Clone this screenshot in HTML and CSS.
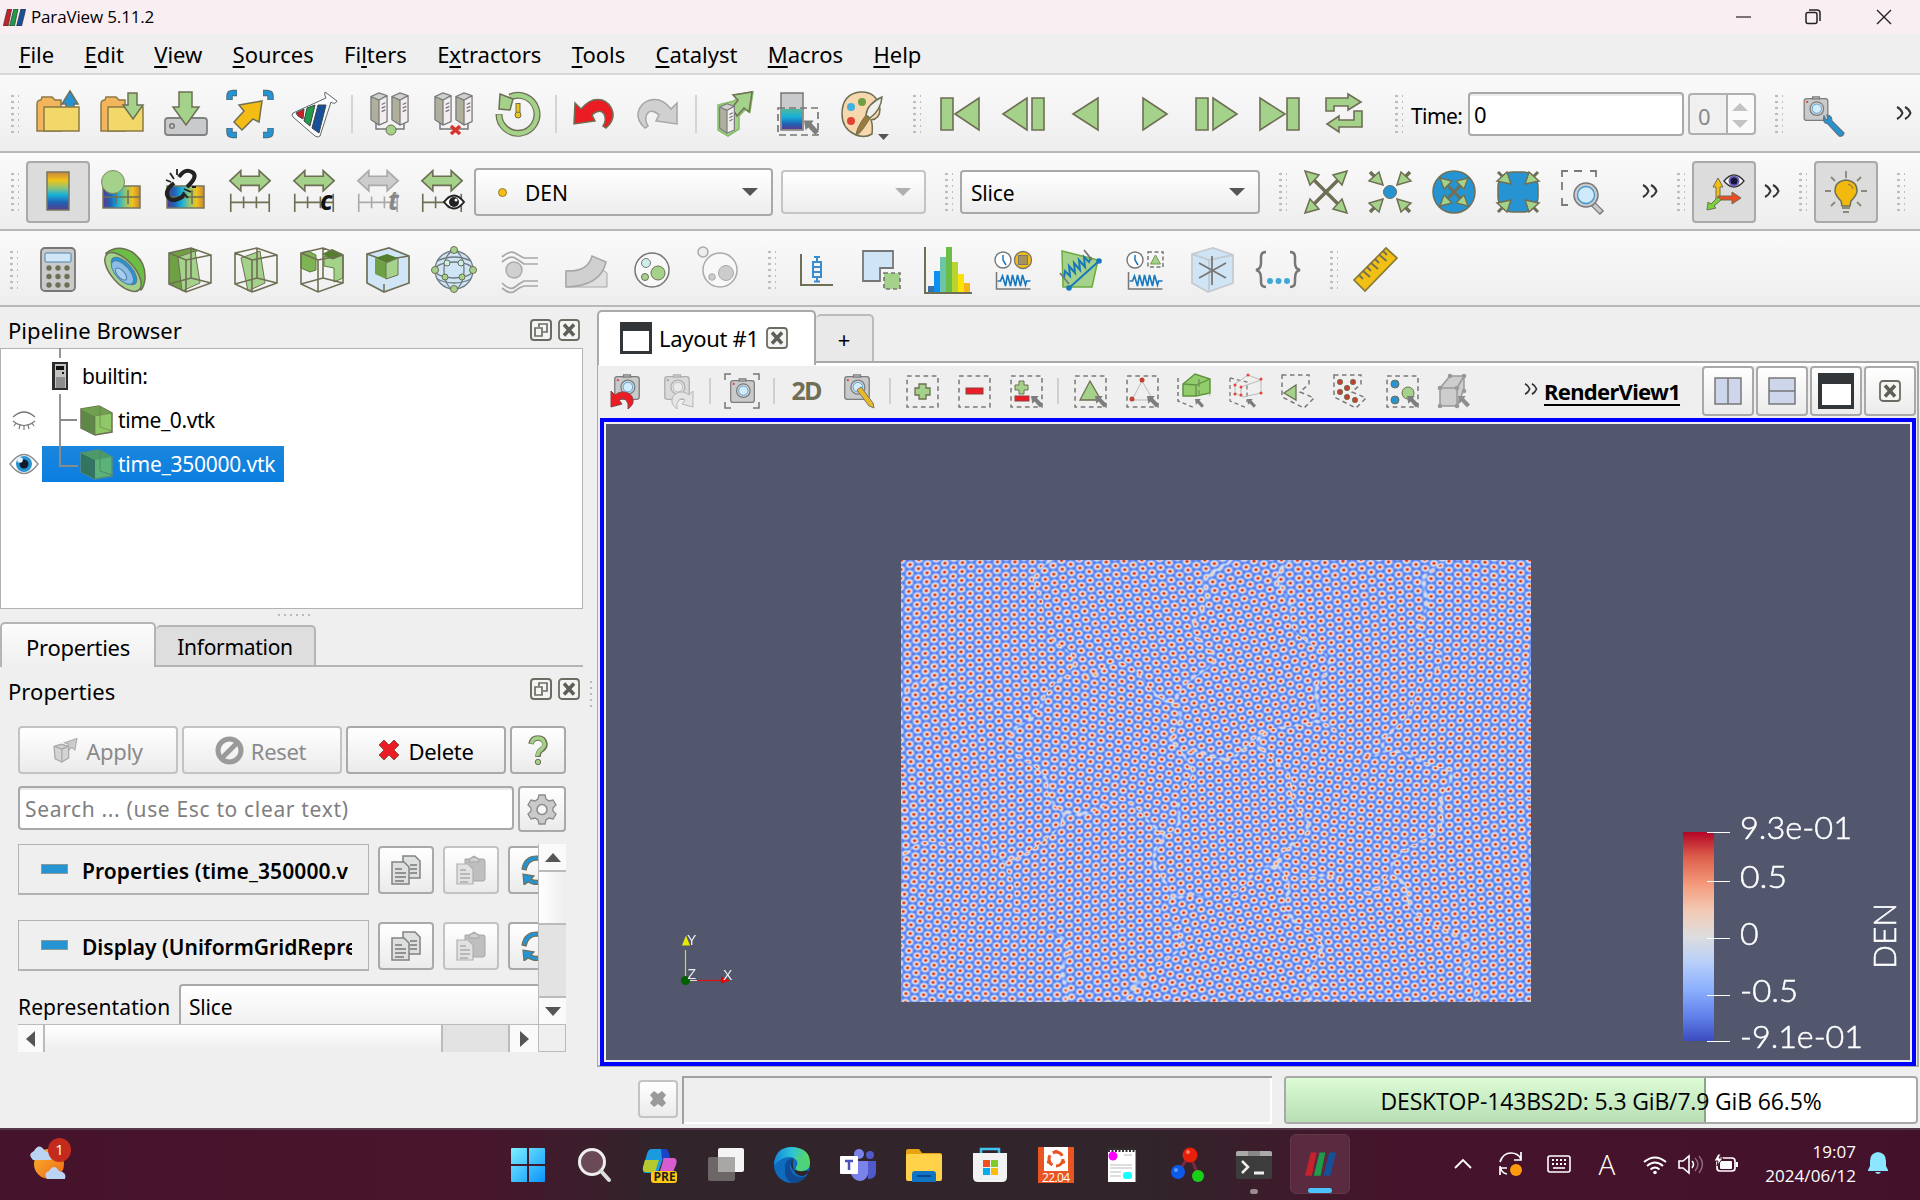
FILE: index.html
```html
<!DOCTYPE html>
<html lang="en">
<head>
<meta charset="utf-8">
<title>ParaView 5.11.2</title>
<link rel="stylesheet" href="styles.css">
</head>
<body>
<svg class="defs" width="0" height="0">
  <defs>
    <linearGradient id="rainbow" x1="0" y1="0" x2="0" y2="1"><stop offset="0" stop-color="#c9843c"/><stop offset=".22" stop-color="#f0c419"/><stop offset=".42" stop-color="#8cc37a"/><stop offset=".6" stop-color="#17b0d8"/><stop offset=".8" stop-color="#1f62b5"/><stop offset="1" stop-color="#5a3b8c"/></linearGradient>
    <linearGradient id="rainbowH" x1="0" y1="0" x2="1" y2="0"><stop offset="0" stop-color="#5a3b8c"/><stop offset=".2" stop-color="#1f62b5"/><stop offset=".4" stop-color="#17b0d8"/><stop offset=".6" stop-color="#8cc37a"/><stop offset=".8" stop-color="#f0c419"/><stop offset="1" stop-color="#c9843c"/></linearGradient>
    <linearGradient id="cool" x1="0" y1="0" x2="0" y2="1"><stop offset="0" stop-color="#4db99b"/><stop offset=".4" stop-color="#17b0d8"/><stop offset=".75" stop-color="#1f62b5"/><stop offset="1" stop-color="#5a3b8c"/></linearGradient>
    <linearGradient id="coolwarm" x1="0" y1="0" x2="0" y2="1"><stop offset="0" stop-color="#b40426"/><stop offset=".12" stop-color="#dd5f4b"/><stop offset=".25" stop-color="#f49a7b"/><stop offset=".38" stop-color="#f2cbb7"/><stop offset=".5" stop-color="#dddddd"/><stop offset=".62" stop-color="#b9d0f9"/><stop offset=".75" stop-color="#8db0fe"/><stop offset=".88" stop-color="#6282ea"/><stop offset="1" stop-color="#3b4cc0"/></linearGradient>
    <symbol id="camera" viewBox="0 0 32 32"><path d="M12 3V1h8v2h7q3 0 3 3v20q0 3-3 3H5q-3 0-3-3V6q0-3 3-3z" fill="#c9cacb" stroke="#7c7c7c" stroke-width="1.5"/><path d="M11 3.5h10" stroke="#7c7c7c" stroke-width="1.5"/><circle cx="17" cy="15" r="8" fill="#dadada" stroke="#7c7c7c" stroke-width="1.5"/><circle cx="17" cy="15" r="5.5" fill="#d3ecfb" stroke="#4595cc"/><circle cx="5.5" cy="7" r="1.3" fill="#e8413a"/></symbol>
    <symbol id="cursor" viewBox="0 0 14 14"><path d="M0 0h9L7 2.5 14 10l-3.500 3.500L4 6.500 1.500 9z" fill="#7d7d7d"/></symbol>
    <symbol id="cursorThin" viewBox="0 0 14 14"><path d="M0 0h9L7 2.500 14 10l-3.500 3.500L4 6.500 1.500 9z" fill="#8e8e8e"/></symbol>
    <symbol id="tower" viewBox="0 0 20 38"><path d="M1 5 10 1l9 3v29l-9 4-9-6z" fill="#aeb09c"/><path d="M10 9 19 4v29l-9 4z" fill="#f4ecee"/><path d="M1 5 10 1l9 3-9 5z" fill="#cfd2cc"/><path d="M1 5 10 1l9 3v29l-9 4-9-6zM1 5l9 4 9-5M10 9v28M13 14l4-2m-4 6 4-2m-4 6 4-2" fill="none" stroke="#77777a" stroke-width="1.400"/></symbol>
    <symbol id="range" viewBox="0 0 48 48"><path d="M2 14 14 3v6h20V3l12 11-12 11v-6H14v6z" stroke-width="1.800"/><path d="M3 28v20M45 28v20M17 31v13M31 31v13M3 37.500h42" fill="none" stroke-width="1.800"/></symbol>
    <symbol id="wire" viewBox="0 0 48 48"><path d="M3 7 25 2l20 7v28L20 46 3 38zM3 7l17 7 25-5M20 14v32M25 2v30M3 38l22-6 20 5" fill="none" stroke="#6f6f55" stroke-width="1.600"/></symbol>
    <symbol id="wave" viewBox="0 0 36 18"><path d="M1 0v17h34" fill="none" stroke="#777" stroke-width="1.500"/><path d="M2 9h3l2-5 3 10 2-11 3 11 2-11 3 11 2-11 3 11 2-11 3 10 1-4h4" fill="none" stroke="#1878be" stroke-width="1.600"/></symbol>
    <symbol id="clock" viewBox="0 0 18 18"><circle cx="9" cy="9" r="8" fill="#fff" stroke="#777" stroke-width="1.400"/><path d="M9 4v5l3 5" fill="none" stroke="#1878be" stroke-width="1.500"/></symbol>
    <symbol id="floatwin" viewBox="0 0 22 22"><rect x="1" y="1" width="20" height="20" rx="3" fill="#f4f4f2" stroke="#6d6c64" stroke-width="2"/><path d="M5 9h7v8H5zM9 8V5h8v8h-4" fill="none" stroke="#6d6c64" stroke-width="1.700"/></symbol>
    <symbol id="closewin" viewBox="0 0 22 22"><rect x="1" y="1" width="20" height="20" rx="3" fill="#f4f4f2" stroke="#6d6c64" stroke-width="1.800"/><path d="M6 5.500l10 11M16 5.500l-10 11" stroke="#5f5e57" stroke-width="3.500"/></symbol>
    <symbol id="dash" viewBox="0 0 32 32"><rect x="1" y="1" width="30" height="30" fill="none" stroke="#7a7a7a" stroke-width="1.500" stroke-dasharray="4.500 3.500"/></symbol>
    <symbol id="copy" viewBox="0 0 30 30"><path d="M12 1h12l5 5v17H12z" fill="#dde0de" stroke="#808280" stroke-width="1.500"/><path d="M1 7h12l5 5v17H1z" fill="#dde0de" stroke="#808280" stroke-width="1.500"/><path d="M4 14h7m-7 4h11m-11 4h11m-11 4h9M19 10h7m-7 4h7m-7 4h7" stroke="#777" stroke-width="1.500"/></symbol>
    <symbol id="paste" viewBox="0 0 30 30"><path d="M9 4h4l5-3 5 3h4q2 0 2 2v18q0 2-2 2H11q-2 0-2-2z" fill="#bfbfbf" stroke="#a6a6a6"/><path d="M13 7q0-4 5-5 5 1 5 5z" fill="#d0d0d0" stroke="#a6a6a6"/><path d="M1 9h11l5 5v15H1z" fill="#e2e2e2" stroke="#b0b0b0" stroke-width="1.200"/><path d="M4 15h6m-6 4h10m-10 4h10m-10 4h8" stroke="#aaa" stroke-width="1.500"/></symbol>
    <symbol id="reload" viewBox="0 0 30 30"><path d="M1 14Q3 1 16 1q7 0 12 6L24 9q-4-4-9-4Q7 6 5 15zM2 19l11 2-3 3q8 4 14-3l4 2Q20 34 7 27l-4 3z" fill="#2693d3" stroke="#6f6f55" stroke-width="1.200"/></symbol>
    <symbol id="pvlogo" viewBox="0 0 32 24"><path d="M6 0h6L7 24H0z" fill="#c7222c"/><path d="M15 0h6l-5 24H9z" fill="#1f9c4a"/><path d="M25 0h7l-6 24h-7z" fill="#16509a"/></symbol>
    <symbol id="more" viewBox="0 0 16 14"><path d="M1 1q4 2 5.500 6Q5 11 1 13M9 1q4 2 5.500 6Q13 11 9 13" fill="none" stroke="#333" stroke-width="2"/></symbol>
  </defs>
</svg>

<div class="app">
  <header class="titlebar">
    <svg class="logo" width="23" height="17" viewBox="0 0 32 24"><use href="#pvlogo" stroke="#333"/></svg>
    <span class="apptitle">ParaView 5.11.2</span>
    <div class="winctl">
      <svg width="16" height="16"><path d="M0 8h15" stroke="#222" stroke-width="1.200"/></svg>
      <svg width="16" height="16" fill="none" stroke="#222" stroke-width="1.500"><rect x="0" y="3.500" width="11" height="11" rx="2"/><path d="M3 1h8q3 0 3 3v8"/></svg>
      <svg width="16" height="16"><path d="M1 1l14 14M15 1 1 15" stroke="#222" stroke-width="1.400"/></svg>
    </div>
  </header>

  <nav class="menubar">
    <span><u>F</u>ile</span><span><u>E</u>dit</span><span><u>V</u>iew</span><span><u>S</u>ources</span><span>Fi<u>l</u>ters</span><span>E<u>x</u>tractors</span><span><u>T</u>ools</span><span><u>C</u>atalyst</span><span><u>M</u>acros</span><span><u>H</u>elp</span>
  </nav>

  <div class="toolbar">
    <i class="grip first"></i>
    <b class="cell"><svg viewBox="0 0 48 48"><path d="M3 41V14q0-4 4-4l1-3h10l3 3h6v31z" fill="#f2b45c" stroke="#8a7a45" stroke-width="1.500"/><path d="M36 1l8 13h-4v8h-8v-8h-4z" fill="#2693d3" stroke="#6f6f55" stroke-width="1.500"/><rect x="10" y="17" width="35" height="24" fill="#f1d868" stroke="#8a7a45" stroke-width="1.500"/></svg></b>
    <b class="cell"><svg viewBox="0 0 48 48"><path d="M3 41V14q0-4 4-4l1-3h10l3 3h6v31z" fill="#f2b45c" stroke="#8a7a45" stroke-width="1.500"/><rect x="10" y="17" width="35" height="24" fill="#f1d868" stroke="#8a7a45" stroke-width="1.500"/><path d="M30 3h9v12h6L35 29 25 15h5z" fill="#a5d28a" stroke="#6f6f55" stroke-width="1.500"/></svg></b>
    <b class="cell"><svg viewBox="0 0 48 48"><rect x="3" y="28" width="42" height="17" rx="3" fill="#c9cacb" stroke="#828282" stroke-width="1.800"/><circle cx="10" cy="36" r="2.300" fill="none" stroke="#777" stroke-width="1.500"/><path d="M17 2h13v15h7L24 35 11 17h6z" fill="#a5d28a" stroke="#6f6f55" stroke-width="1.500"/></svg></b>
    <b class="cell"><svg viewBox="0 0 48 48"><path d="M3.500 10V6Q3.500 3 7 3h4M37 3h4q3.500 0 3.500 3v4M3.500 38v4q0 3 3.500 3h4M37 45h4q3.500 0 3.500-3v-4" fill="none" stroke="#506b70" stroke-width="6.500"/><path d="M3.500 9.500V6Q3.500 3 7 3h3.500M37.500 3H41q3.500 0 3.500 3v3.500M3.500 38.500V42q0 3 3.500 3h3.500M37.500 45H41q3.500 0 3.500-3v-3.500" fill="none" stroke="#2693d3" stroke-width="4.500"/><path d="M36 11l-3 21-6-3-11 11-8-8L18 21l-5-6z" fill="#f5bd14" stroke="#6f6f55" stroke-width="1.500"/></svg></b>
    <b class="cell"><svg viewBox="0 0 48 48"><path d="M35 2 47 11q-2 4-6 1L30 46q-2 2-5 0L3 27q-2-2 0-4L36 8q-2-3-1-6z" fill="#fdfdfd" stroke="#5b6870" stroke-width="1"/><path d="M6 23l8-4-1 10-5-3z" fill="#c7222c" stroke="#444"/><path d="M17 18l8-3-5 21-6-5z" fill="#1f9c4a" stroke="#444"/><path d="M28 15h8l-7 28-7-5z" fill="#16509a" stroke="#444"/></svg></b>
    <i class="sep"></i>
    <b class="cell"><svg viewBox="0 0 48 48"><path d="M10 30v9h28v-9" fill="none" stroke="#77777a" stroke-width="1.500"/><use href="#tower" x="3" y="2" width="20" height="34"/><use href="#tower" x="24" y="2" width="20" height="34"/><circle cx="25" cy="40" r="5" fill="#a5d28a" stroke="#6f6f55"/></svg></b>
    <b class="cell"><svg viewBox="0 0 48 48"><path d="M10 30v9h28v-9" fill="none" stroke="#77777a" stroke-width="1.500"/><use href="#tower" x="3" y="2" width="20" height="34"/><use href="#tower" x="24" y="2" width="20" height="34"/><path d="M21 36l9 8M30 36l-9 8" stroke="#d8362c" stroke-width="3.500"/></svg></b>
    <b class="cell"><svg viewBox="0 0 48 48"><path d="M5 24a19 19 0 1 0 11-17" fill="none" stroke="#6f6f55" stroke-width="7"/><path d="M5 24.500a19 19 0 1 0 11-17.300" fill="none" stroke="#a5d28a" stroke-width="4.500"/><path d="M6 4 19 9l-3 11-11-1z" fill="#a5d28a" stroke="#6f6f55" stroke-width="1.500"/><path d="M24 13v13" stroke="#6f6f55" stroke-width="5"/><path d="M24 14v9" stroke="#f0c419" stroke-width="3"/><circle cx="24" cy="25" r="3" fill="#f0c419" stroke="#6f6f55"/></svg></b>
    <i class="sep"></i>
    <b class="cell"><svg viewBox="0 0 48 48"><path d="M5 13l6 6Q21 7 32 10q9 3 11 13 1 8-7 15l-3-2q4-6 1-12-4-6-12 1l3 6-21 3z" fill="#ec1c24" stroke="#6f6f55" stroke-width="1.500"/></svg></b>
    <b class="cell"><svg viewBox="0 0 48 48"><path d="M43 13l-6 6Q28 7 16 10 6 13 4 23q-1 8 7 15l3-2q-4-6-1-12 4-6 12 1l-3 6 21 3z" fill="#d0d0d0" stroke="#a6a6a6" stroke-width="1.500"/></svg></b>
    <i class="sep"></i>
    <b class="cell"><svg viewBox="0 0 48 48"><path d="M8 15 24 11l3-3-3-3 19-3-3 20-4-3-7 7v13l-11 7-10-6z" fill="#a5d28a" stroke="#87bd6a" stroke-width="1.500"/><path d="M23 5l19-3-3 20-5-4-7 8-5-8 6-8z" fill="#a5d28a" stroke="#6f6f55" stroke-width="1.500"/><use href="#tower" x="6" y="13" width="22" height="31"/></svg></b>
    <b class="cell"><svg viewBox="0 0 48 48"><rect x="7" y="3" width="22" height="37" fill="#c9cacb" stroke="#777" stroke-width="1.500"/><rect x="8" y="19" width="20" height="20" fill="url(#cool)"/><rect x="4" y="18" width="40" height="27" fill="none" stroke="#777" stroke-width="1.700" stroke-dasharray="7 4"/><use href="#cursor" x="30" y="30" width="15" height="16"/></svg></b>
    <b class="cell"><svg viewBox="0 0 48 48"><path d="M4 24Q4 4 22 2q17-1 20 17 0 10-9 11 2 5 1 14-8 5-18 0Q4 38 4 24z" fill="#f6d7ae" stroke="#6f6f55" stroke-width="1.500"/><circle cx="13" cy="17" r="4" fill="#3fb0e0"/><circle cx="24" cy="12" r="4" fill="#6fa044"/><circle cx="13" cy="31" r="4" fill="#dd4433"/><path d="M18 46q0-8 10-21l4 3Q24 42 18 46z" fill="#9a7b3b" stroke="#6f6f55"/><path d="M28 25q1-11 16-18-1 13-12 21z" fill="#eef0ee" stroke="#6f6f55" stroke-width="1.500"/><path d="M40 44h11l-5.500 6z" fill="#555"/></svg></b>
    <i class="grip"></i>
    <b class="cell"><svg class="media" viewBox="0 0 48 48"><path d="M5 8h12v32H5zM19 24 43 8v32z"/></svg></b>
    <b class="cell"><svg class="media" viewBox="0 0 48 48"><path d="M3 24 27 8v32zM32 8h12v32H32z"/></svg></b>
    <b class="cell"><svg class="media" viewBox="0 0 48 48"><path d="M9 24 34 8v32z"/></svg></b>
    <b class="cell"><svg class="media" viewBox="0 0 48 48"><path d="M39 24 15 8v32z"/></svg></b>
    <b class="cell"><svg class="media" viewBox="0 0 48 48"><path d="M4 8h12v32H4zM21 8l24 16-24 16z"/></svg></b>
    <b class="cell"><svg class="media" viewBox="0 0 48 48"><path d="M4 8l25 16L4 40zM31 8h12v32H31z"/></svg></b>
    <b class="cell"><svg class="media" viewBox="0 0 48 48"><path d="M6 21V8h22V4l13 8-13 8v-4H14v5zM42 21v16H19v5L7 34l12-8v4h15v-9z"/></svg></b>
    <i class="grip"></i>
    <label class="timelabel">Time:</label>
    <div class="field timefield">0</div>
    <div class="spin"><span>0</span><svg width="28" height="40"><path d="M6 16 14 8l8 8zM6 25l8 8 8-8z" fill="#c3c3c3"/></svg></div>
    <i class="grip"></i>
    <b class="cell"><svg viewBox="0 0 48 48"><use href="#camera" x="2" y="6" width="32" height="27"/><path d="M26 26q-2 7 4 8l11 12q4 1 5-3L34 31q0-6-5-6l1 4-2 1z" fill="#2693d3" stroke="#5f7480" stroke-width="1.200"/></svg></b>
    <svg class="more m1" width="16" height="14"><use href="#more"/></svg>
  </div>

  <div class="toolbar two">
    <i class="grip first"></i>
    <b class="cell on"><svg viewBox="0 0 48 48"><rect x="13" y="4" width="22" height="38" fill="url(#rainbow)" stroke="#777760" stroke-width="1.500"/></svg></b>
    <b class="cell"><svg viewBox="0 0 48 48"><rect x="5" y="18" width="37" height="22" fill="url(#rainbowH)" stroke="#777760" stroke-width="1.500"/><path d="M5 29h37M18 22v14M30 22v14" stroke="#6f6f55" stroke-width="1.500"/><circle cx="15" cy="14" r="11.500" fill="#a5d28a" stroke="#7d8a60"/></svg></b>
    <b class="cell"><svg viewBox="0 0 48 48"><rect x="5" y="18" width="37" height="22" fill="url(#rainbowH)" stroke="#777760" stroke-width="1.500"/><path d="M5 29h37M30 22v14" stroke="#6f6f55" stroke-width="1.500"/><path d="M17 9q6-9 13-5t-5 15M12 15q-10 8-6 14t14 0l2-3" fill="none" stroke="#222" stroke-width="4"/><path d="M4 12l5 2M8 5l4 6M15 1v6M22 21l7 3M21 24l5 6M30 19l4 0" stroke="#222" stroke-width="1.800"/></svg></b>
    <b class="cell"><svg class="rng" viewBox="0 0 48 48"><use href="#range" width="48" height="44"/></svg></b>
    <b class="cell"><svg class="rng" viewBox="0 0 48 48"><use href="#range" width="48" height="44"/><text x="30" y="42" class="glyph">c</text></svg></b>
    <b class="cell"><svg class="rng off" viewBox="0 0 48 48"><use href="#range" width="48" height="44"/><text x="34" y="42" class="glyph gray">t</text></svg></b>
    <b class="cell"><svg class="rng" viewBox="0 0 48 48"><use href="#range" width="48" height="44"/><path d="M26 34q10-13 20 0-10 13-20 0z" fill="#fff" stroke="#222" stroke-width="2"/><circle cx="36" cy="34" r="5" fill="#222" stroke="none"/><circle cx="38" cy="32" r="1.500" fill="#fff" stroke="none"/></svg></b>
    <div class="combo den"><i class="dot"></i><span>DEN</span><i class="tri"></i></div>
    <div class="combo comp dim"><i class="tri"></i></div>
    <i class="grip"></i>
    <div class="combo rep"><span>Slice</span><i class="tri"></i></div>
    <i class="grip"></i>
    <b class="cell"><svg viewBox="0 0 48 48"><path d="M8 8l32 32M40 8 8 40" stroke="#6f6f55" stroke-width="3.500"/><g fill="#a5d28a" stroke="#6f6f55" stroke-width="1.500"><path d="M3 3l14 4-9 10zM45 3l-14 4 9 10zM3 45l14-4-9-10zM45 45l-14-4 9-10z"/></g></svg></b>
    <b class="cell"><svg viewBox="0 0 48 48"><path d="M4 4l8 8M44 4l-8 8M4 44l8-8M44 44l-8-8" stroke="#6f6f55" stroke-width="3.500"/><g fill="#a5d28a" stroke="#6f6f55" stroke-width="1.500"><path d="M17 17 3 13 13 4zM31 17l14-4-10-9zM17 31 3 35l10 9zM31 31l14 4-10 9z"/></g><circle cx="24" cy="24" r="6.500" fill="#2693d3" stroke="#6f6f55"/></svg></b>
    <b class="cell"><svg viewBox="0 0 48 48"><circle cx="24" cy="24" r="21" fill="#2693d3" stroke="#6f6f55" stroke-width="1.500"/><path d="M12 12l24 24M36 12 12 36" stroke="#6f6f55" stroke-width="3"/><g fill="#a5d28a" stroke="#6f6f55" stroke-width="1.300"><path d="M10 10l12 3-8 8zM38 10l-12 3 8 8zM10 38l12-3-8-8zM38 38l-12-3 8-8z"/></g></svg></b>
    <b class="cell"><svg viewBox="0 0 48 48"><rect x="4" y="4" width="40" height="40" rx="15" fill="#2693d3" stroke="#6f6f55" stroke-width="1.500"/><path d="M4 4l8 8M44 4l-8 8M4 44l8-8M44 44l-8-8" stroke="#6f6f55" stroke-width="3"/><g fill="#a5d28a" stroke="#6f6f55" stroke-width="1.500"><path d="M17 16 3 13 13 4zM31 16l14-3-10-9zM17 32 3 35l10 9zM31 32l14 3-10 9z"/></g></svg></b>
    <b class="cell"><svg viewBox="0 0 48 48"><path d="M4 9V3h6M16 3h8M32 3h6v6M4 14v8M4 30v7h6" fill="none" stroke="#7a7a7a" stroke-width="1.800"/><path d="M34 35l10 10" stroke="#777" stroke-width="6"/><path d="M34 35l9 9" stroke="#c9cacb" stroke-width="3.500"/><circle cx="28" cy="27" r="12" fill="#c9cacb" stroke="#777" stroke-width="1.500"/><circle cx="28" cy="27" r="8.500" fill="#cfeafa" stroke="#4595cc" stroke-width="1.300"/></svg></b>
    <svg class="more m2" width="16" height="14"><use href="#more"/></svg>
    <i class="grip g2"></i>
    <b class="cell on"><svg viewBox="0 0 48 48"><path d="M18 10l5 9h-3v13h-4V19h-3z" fill="#f5bd14" stroke="#6f6f55"/><path d="M18 28h14v-4l9 6-9 6v-4H18z" fill="#ee4b22" stroke="#6f6f55"/><path d="M18 29l-7 7-3-2-1 8 9-2-2-2 7-6z" fill="#7bd13c" stroke="#6f6f55"/><path d="M24 13q10-12 20 0-10 12-20 0z" fill="#fff" stroke="#333" stroke-width="1.300"/><circle cx="34" cy="13" r="5.500" fill="#6a62b8"/><circle cx="34" cy="13" r="3.500" fill="#161639"/></svg></b>
    <svg class="more m3" width="16" height="14"><use href="#more"/></svg>
    <i class="grip g2"></i>
    <b class="cell on"><svg viewBox="0 0 48 48"><path d="M24 3v7M9 9l4 4M39 9l-4 4M3 23h6M39 23h6M9 38l4-4M39 38l-4-4M20 40h8M21 44h6" stroke="#8a8a7a" stroke-width="1.800"/><path d="M24 12q11 1 11 11 0 4-6 10l-1 5h-8l-1-5q-6-6-6-10 0-10 11-11z" fill="#f2b90f" stroke="#6f6f55" stroke-width="1.500"/><path d="M26 16q4 1 5 5" fill="none" stroke="#6f6f55"/></svg></b>
    <i class="grip"></i>
  </div>

  <div class="toolbar three">
    <i class="grip first"></i>
    <b class="cell"><svg viewBox="0 0 48 48"><rect x="7" y="2" width="34" height="43" rx="4" fill="#c9cacb" stroke="#777" stroke-width="1.800"/><rect x="11" y="7" width="26" height="9" rx="1" fill="#d0e6f7" stroke="#4d82ab"/><g fill="#6f6f55"><circle cx="15" cy="22" r="2.700"/><circle cx="24" cy="22" r="2.700"/><circle cx="33" cy="22" r="2.700"/><circle cx="15" cy="30.500" r="2.700"/><circle cx="24" cy="30.500" r="2.700"/><circle cx="33" cy="30.500" r="2.700"/><circle cx="15" cy="39" r="2.700"/><circle cx="24" cy="39" r="2.700"/><circle cx="33" cy="39" r="2.700"/></g></svg></b>
    <b class="cell"><svg viewBox="0 0 48 48"><path d="M6 7Q18-2 32 6q14 9 13 27-1 8-4 11z" fill="#6cbd45" stroke="#6f6f55" stroke-width="1.500"/><ellipse cx="23" cy="26" rx="11.500" ry="24" transform="rotate(-42 23 26)" fill="#a5d28a" stroke="#6f6f55" stroke-width="1.500"/><ellipse cx="24" cy="25" rx="8" ry="17" transform="rotate(-42 24 25)" fill="#2693d3" stroke="#5d7c8c"/><ellipse cx="22.500" cy="26.500" rx="7" ry="14.500" transform="rotate(-42 22.500 26.500)" fill="#8dbde4" stroke="#4d82ab"/><ellipse cx="21" cy="28" rx="3.500" ry="7.500" transform="rotate(-42 21 28)" fill="#a9cdec" stroke="#4d82ab"/></svg></b>
    <b class="cell"><svg viewBox="0 0 48 48"><path d="M3 7 25 2l7 3-12 8v33L3 38z" fill="#6fa044"/><path d="M12 11 29 5l5 32-18 8z" fill="#a5d28a" stroke="#6f6f55"/><use href="#wire" width="48" height="48"/></svg></b>
    <b class="cell"><svg viewBox="0 0 48 48"><path d="M9 12 28 5l5 32-17 8z" fill="#a5d28a" stroke="#6f6f55"/><use href="#wire" width="48" height="48"/></svg></b>
    <b class="cell"><svg viewBox="0 0 48 48"><path d="M3 7l7-2 8 4v15l-6 2-9-4z" fill="#7fb455" stroke="#5b7d3a"/><path d="M24 8l10-5 11 5-10 6z" fill="#527e2e"/><path d="M26 10l9 3 10-4v23l-9 4V22l-10-2z" fill="#a5d28a" stroke="#5b7d3a"/><use href="#wire" width="48" height="48"/></svg></b>
    <b class="cell"><svg viewBox="0 0 48 48"><path d="M3 8 25 2l20 8v27L20 46 3 37z" fill="#d0e6f7" stroke="#6f6f55" stroke-width="1.700"/><path d="M3 8l17 6 25-4M20 38v8" fill="none" stroke="#6f6f55" stroke-width="1.500"/><path d="M11 12 23 8l11 4-12 5z" fill="#527e2e"/><path d="M11 12l11 5v16l-11-5z" fill="#6fa044"/><path d="M22 17l12-5v17l-12 4z" fill="#a5d28a" stroke="#6f6f55"/></svg></b>
    <b class="cell"><svg viewBox="0 0 48 48"><g fill="#cfe4f5" stroke="#6f7a80" stroke-width="1.300"><circle cx="24" cy="24" r="19"/><ellipse cx="24" cy="24" rx="10" ry="19" fill="none"/><ellipse cx="24" cy="24" rx="19" ry="8" fill="none"/><path d="M7 15q17-8 34 0M7 33q17 8 34 0" fill="none"/></g><g fill="#a5d28a" stroke="#6f6f55"><circle cx="24" cy="4" r="3.500"/><circle cx="24" cy="43" r="3.500"/><circle cx="5" cy="24" r="3.500"/><circle cx="43" cy="24" r="3.500"/><circle cx="15" cy="31" r="3"/><circle cx="32" cy="31" r="3"/><circle cx="17" cy="17" r="3" fill="#cdeee9"/><circle cx="31" cy="17" r="3" fill="#cdeee9"/></g></svg></b>
    <b class="cell"><svg viewBox="0 0 48 48"><g fill="none" stroke="#a8a8a8" stroke-width="1.700"><path d="M6 11q8-7 13-4t9 5h14M6 16q8-7 13-4t9 6h14M6 37q8 8 13 4t9-6h14M6 42q8 7 13 3t9-5h14"/></g><circle cx="18" cy="24" r="8" fill="#d0d0d0" stroke="#aaa" stroke-width="1.500"/></svg></b>
    <b class="cell"><svg viewBox="0 0 48 48"><path d="M4 25 36 23q5 0 9 4v14H4z" fill="#e0e0e0" stroke="#a8a8a8"/><path d="M4 25Q26 26 30 10l14 6Q39 40 4 41z" fill="#d0d0d0" stroke="#a8a8a8" stroke-width="1.500"/></svg></b>
    <b class="cell"><svg viewBox="0 0 48 48"><circle cx="24" cy="24" r="17" fill="#f8f8f8" stroke="#777" stroke-width="1.500"/><circle cx="18" cy="17" r="4.500" fill="#cdeee9" stroke="#777"/><circle cx="30" cy="27" r="7" fill="#a5d28a" stroke="#6f6f55"/><circle cx="17" cy="31" r="3.500" fill="#a5d28a" stroke="#6f6f55"/></svg></b>
    <b class="cell last"><svg viewBox="0 0 48 48"><circle cx="27" cy="24" r="17" fill="#f8f8f8" stroke="#aaa" stroke-width="1.500"/><circle cx="10" cy="6" r="5" fill="#eee" stroke="#aaa" stroke-width="1.500"/><circle cx="33" cy="27" r="7.500" fill="#ccc" stroke="#aaa"/><circle cx="19" cy="31" r="3.300" fill="#ccc" stroke="#aaa"/></svg></b>
    <i class="grip"></i>
    <b class="cell"><svg viewBox="0 0 48 48"><path d="M9 8v31h32" fill="none" stroke="#6f6f55" stroke-width="2"/><path d="M25 11v5M25 31v5M22 11h6M22 35.500h6M21 16h8v15h-8zM21 21h8M21 26h8" fill="none" stroke="#3b8bd0" stroke-width="2"/></svg></b>
    <b class="cell"><svg viewBox="0 0 48 48"><path d="M5 5h30v17H22v13H5z" fill="#cfe4f5" stroke="#777" stroke-width="1.800"/><rect x="26" y="27" width="16" height="16" fill="#a5d28a" stroke="#777" stroke-width="1.700" stroke-dasharray="4 3"/></svg></b>
    <b class="cell"><svg viewBox="0 0 48 48"><path d="M4 40h6v8H4z" fill="#3b6fa8"/><path d="M10 25h6v23h-6z" fill="#0a8ff5"/><path d="M16 11h6v37h-6z" fill="#6cc5a8"/><path d="M22 1h6v47h-6z" fill="#6cbd45"/><path d="M28 16h6v32h-6z" fill="#b8d432"/><path d="M34 28h6v20h-6z" fill="#fbe206"/><path d="M40 37h6v11h-6z" fill="#f5b41c"/><path d="M1 1v46h47" fill="none" stroke="#6f6f55" stroke-width="2"/></svg></b>
    <b class="cell"><svg viewBox="0 0 48 48"><use href="#clock" x="4" y="5" width="18" height="18"/><circle cx="33" cy="14" r="8.500" fill="#f5bd14" stroke="#777" stroke-width="1.300"/><rect x="28.500" y="9.500" width="9" height="9" fill="#a4935a" stroke="#777"/><use href="#wave" x="5" y="26" width="37" height="18"/></svg></b>
    <b class="cell"><svg viewBox="0 0 48 48"><path d="M6 5 42 14 36 41H7z" fill="#a5d28a" stroke="#6cab3f" stroke-width="1.500"/><path d="M8 32l1-7 5 5-1-10 6 7-1-10 6 7-1-10 6 7-1-10 5 5 2-5M13 42 43 15" fill="none" stroke="#1878be" stroke-width="2"/><path d="M4 27l9 11M28 4l8 10" stroke="#777" stroke-width="1.800"/><circle cx="13" cy="42" r="2.800" fill="#1878be"/><circle cx="43" cy="15" r="2.800" fill="#1878be"/></svg></b>
    <b class="cell"><svg viewBox="0 0 48 48"><use href="#clock" x="4" y="5" width="18" height="18"/><rect x="26" y="6" width="15" height="15" fill="none" stroke="#777" stroke-dasharray="4 2.500" stroke-width="1.500"/><path d="M33.500 9l5 9h-10z" fill="#a5d28a" stroke="#6f9e50"/><use href="#wave" x="5" y="26" width="37" height="18"/></svg></b>
    <b class="cell"><svg viewBox="0 0 48 48"><path d="M4 8 25 2l20 7v28L20 46 4 37z" fill="#cfe4f5" stroke="#c5cbd0" stroke-width="1.800"/><path d="M4 8l17 6 24-5M21 14v32" fill="none" stroke="#c5cbd0" stroke-width="2"/><path d="M24 10v29M11 17l27 15M38 17 11 32" stroke="#777" stroke-width="1.800"/></svg></b>
    <b class="cell"><svg viewBox="0 0 48 48"><path d="M12 6q-5 0-5 5v6q0 6-5 7 5 1 5 8v4q0 5 5 5M36 6q5 0 5 5v6q0 6 5 7-5 1-5 8v4q0 5-5 5" fill="none" stroke="#777" stroke-width="2.500"/><g fill="#3fa8d8"><circle cx="16" cy="35" r="3"/><circle cx="24.500" cy="35" r="3"/><circle cx="33" cy="35" r="3"/></g></svg></b>
    <i class="grip tight"></i>
    <b class="cell"><svg viewBox="0 0 48 48"><path d="M34 2 45 12 13 45 2 34z" fill="#f2c015" stroke="#8a7a35" stroke-width="1.700"/><path d="M31 5l4 4M27.500 9l7 6M23 13l4 4M19 17l7 6M15 21l4 4M11 25l7 6M7 29l4 4" stroke="#6f6f55" stroke-width="1.800"/></svg></b>
  </div>

  <main class="work">
    <aside class="dock">
      <div class="docktitle"><span>Pipeline Browser</span><svg width="22" height="22"><use href="#floatwin"/></svg><svg width="22" height="22"><use href="#closewin"/></svg></div>
      <div class="tree">
        <svg class="branches" width="30" height="136"><path d="M7 1v10M7 47v73h17M7 73h17" transform="translate(0 -2)" fill="none" stroke="#8a8a8a" stroke-width="1.800"/></svg>
        <div class="node">
          <svg class="srv" width="16" height="28"><rect width="16" height="28" fill="#2b2b2b"/><rect x="3" y="2" width="11" height="24" fill="#c3c3c0"/><rect x="4" y="4" width="8" height="4" fill="#111"/><rect x="4" y="15" width="9" height="11" fill="#8d8d8d"/><rect x="10" y="10" width="2" height="2" fill="#111"/></svg>
          <span class="tx-built">builtin:</span>
        </div>
        <div class="node">
          <svg class="eye" width="28" height="22"><path d="M3 8q11-10 22 0M3 12q11 9 22 0M6 14l-2 3M10 16l-1 4M14 17v4M18 16l1 4M22 14l2 3" fill="none" stroke="#777" stroke-width="1.200"/></svg>
          <svg class="cube" width="33" height="31" viewBox="0 0 33 31"><path d="M1 4 19 1l13 7v19L15 30 1 23z" fill="#8fc866" stroke="#6f6f55" stroke-width="1.500"/><path d="M1 4l14 7v19L1 23z" fill="#5f8747"/><path d="M1 4 19 1l13 7-17 3z" fill="#6fa04d"/><path d="M15 11v19M15 11l17-3M20 2v20l12 4" fill="none" stroke="#6f6f55" opacity=".6"/></svg>
          <span class="tx-t0">time_0.vtk</span>
        </div>
        <div class="node">
          <svg class="eye" width="28" height="22"><path d="M0 11q14-19 28 0-14 19-28 0z" fill="#fff" stroke="#8a8a8a" stroke-width="1.300"/><circle cx="14" cy="11" r="8" fill="#2693d3"/><circle cx="14" cy="11" r="4.500" fill="#111a2c"/><circle cx="10" cy="7" r="2.800" fill="#e8f4fb"/></svg>
          <div class="sel"><svg class="cube" width="33" height="31" viewBox="0 0 33 31"><path d="M1 4 19 1l13 7v19L15 30 1 23z" fill="#5cb37a" stroke="#5a8a80" stroke-width="1.500"/><path d="M1 4l14 7v19L1 23z" fill="#337461"/><path d="M1 4 19 1l13 7-17 3z" fill="#4b9a68"/><path d="M20 2v20l12 4" fill="none" stroke="#4f8a60"/></svg><span class="tx-t1">time_350000.vtk</span></div>
        </div>
      </div>
      <i class="hhandle"></i>
      <div class="tabs"><span class="tab act">Properties</span><span class="tab info">Information</span></div>
      <div class="docktitle second"><span>Properties</span><svg width="22" height="22"><use href="#floatwin"/></svg><svg width="22" height="22"><use href="#closewin"/></svg><i class="vhandle"></i></div>
      <div class="props">
        <div class="btnrow">
          <div class="btn dim"><svg width="25" height="26" viewBox="0 0 48 48"><path d="M22 10l24-8-4 22-6-5-8 8-5-6 7-8z" fill="#ccc" stroke="#aaa" stroke-width="2"/><path d="M2 17l14-4 14 4v22l-13 8-13-6z" fill="#d4d4d4" stroke="#aaa" stroke-width="2.500"/><path d="M3 17l14 5 12-5M17 22v24" fill="none" stroke="#aaa" stroke-width="2.500"/></svg><span class="tx-apply">Apply</span></div>
          <div class="btn dim reset"><svg width="29" height="29"><circle cx="14.500" cy="14.500" r="11.500" fill="none" stroke="#9a9a9a" stroke-width="5"/><path d="M7 22 22 7" stroke="#9a9a9a" stroke-width="5"/></svg><span class="tx-reset">Reset</span></div>
          <div class="btn"><svg width="22" height="22"><path d="M6 1l5 5 5-5 5 5-5 5 5 5-5 5-5-5-5 5-5-5 5-5-5-5z" fill="#ec1c24" stroke="#8d5048"/></svg><span class="tx-del">Delete</span></div>
          <div class="btn help"><svg width="20" height="31"><path d="M3 9q1-6 7-6t7 6q0 4-4 6-3 2-3 7" fill="none" stroke="#6f6f55" stroke-width="5.500"/><path d="M3.500 8.500Q4.500 3 10 3t6.500 6q0 3-4 6-3 2-2.700 6" fill="none" stroke="#a5d28a" stroke-width="3.500"/><circle cx="10" cy="27" r="2.700" fill="#a5d28a" stroke="#6f6f55"/></svg></div>
        </div>
        <div class="searchrow">
          <div class="field search">Search ... (use Esc to clear text)</div>
          <div class="btn gear"><svg width="30" height="30" viewBox="0 0 30 30"><path d="M12 1h6l1 4 3 2 4-1 3 5-3 3v3l3 3-3 5-4-1-3 2-1 4h-6l-1-4-3-2-4 1-3-5 3-3v-3L1 11l3-5 4 1 3-2z" fill="#c9cacb" stroke="#8a8a8a" stroke-width="1.300"/><circle cx="15" cy="15.500" r="5" fill="#f6f6f6" stroke="#8a8a8a" stroke-width="1.500"/></svg></div>
        </div>
        <div class="scroll">
          <div class="view">
            <div class="prow"><div class="phead"><i class="minus"></i><b class="tx-p1">Properties (time_350000.v</b></div><div class="btn sq"><svg width="30" height="30"><use href="#copy"/></svg></div><div class="btn sq dim"><svg width="30" height="30"><use href="#paste"/></svg></div><div class="btn sq"><svg width="30" height="30"><use href="#reload"/></svg></div></div>
            <div class="prow"><div class="phead"><i class="minus"></i><b class="tx-p2">Display (UniformGridRepre</b></div><div class="btn sq"><svg width="30" height="30"><use href="#copy"/></svg></div><div class="btn sq dim"><svg width="30" height="30"><use href="#paste"/></svg></div><div class="btn sq"><svg width="30" height="30"><use href="#reload"/></svg></div></div>
            <div class="reprow"><span class="tx-rep">Representation</span><div class="combo small"><span>Slice</span></div></div>
          </div>
          <div class="vbar"><i class="up"><svg width="16" height="9"><path d="M0 9h16L8 0z" fill="#555"/></svg></i><i class="thumb"></i><i class="trough"></i><i class="dn"><svg width="16" height="9"><path d="M0 0h16L8 9z" fill="#555"/></svg></i></div>
          <div class="hbar"><i class="lf"><svg width="9" height="16"><path d="M9 0v16L0 8z" fill="#555"/></svg></i><i class="thumb"></i><i class="trough"></i><i class="rt"><svg width="9" height="16"><path d="M0 0v16l9-8z" fill="#555"/></svg></i></div>
          <div class="corner"></div>
        </div>
      </div>
    </aside>

    <section class="layout">
      <div class="ltabs">
        <div class="ltab"><svg width="32" height="32"><rect width="32" height="32" fill="#333638"/><rect x="3" y="9" width="26" height="20" fill="#fff"/></svg><span>Layout #1</span><svg width="22" height="22"><use href="#closewin"/></svg></div>
        <div class="ltab plus">+</div>
      </div>
      <div class="pane">
        <div class="viewbar">
          <b class="vc"><svg viewBox="0 0 36 36"><use href="#camera" x="3" y="1" width="32" height="28"/><path d="M3 18l4 4q6-5 13-2 6 3 5 10-1 3-5 6 1-6-2-9t-7 0l3 4-11 3z" fill="#ec1c24" stroke="#8d4040"/></svg></b>
          <b class="vc off"><svg viewBox="0 0 36 36"><use href="#camera" x="1" y="1" width="32" height="28"/><path d="M33 18l-4 4q-6-5-12-2-6 3-5 10 1 3 5 6-1-6 2-9t6 0l-3 4 11 3z" fill="#ddd" stroke="#888"/></svg></b>
          <i class="vsep"></i>
          <b class="vc"><svg viewBox="0 0 36 36"><path d="M1 7V1h6M29 1h6v6M1 29v6h6M35 29v6h-6" fill="none" stroke="#777" stroke-width="1.500"/><use href="#camera" x="3" y="5" width="31" height="27"/></svg></b>
          <i class="vsep"></i>
          <b class="vc two-d">2D</b>
          <b class="vc"><svg viewBox="0 0 36 36"><use href="#camera" x="1" y="1" width="32" height="28"/><path d="M17 17l4-3 12 16 1 5-5-2z" fill="#e8b923" stroke="#777"/></svg></b>
          <i class="vsep"></i>
          <b class="vc"><svg viewBox="0 0 36 36"><use href="#dash" x="2" y="2" width="33" height="33"/><path d="M15 11h7v4h4v7h-4v4h-7v-4h-4v-7h4z" fill="#a5d28a" stroke="#6f6f55" stroke-width="1.300"/></svg></b>
          <b class="vc"><svg viewBox="0 0 36 36"><use href="#dash" x="2" y="2" width="33" height="33"/><rect x="10" y="15" width="17" height="6" fill="#ec1c24" stroke="#8d4040"/></svg></b>
          <b class="vc"><svg viewBox="0 0 36 36"><use href="#dash" x="2" y="2" width="33" height="33"/><path d="M11 8h5v4h4v5h-4v4h-5v-4H7v-5h4z" fill="#a5d28a" stroke="#6f6f55"/><rect x="7" y="23" width="14" height="5" fill="#ec1c24" stroke="#8d4040"/><use href="#cursor" x="23" y="23" width="12" height="12"/></svg></b>
          <i class="vsep"></i>
          <b class="vc"><svg viewBox="0 0 36 36"><use href="#dash" x="2" y="2" width="33" height="33"/><path d="M18 8l11 19H8z" fill="#a5d28a" stroke="#6f6f55" stroke-width="1.300"/><use href="#cursor" x="23" y="23" width="12" height="12"/></svg></b>
          <b class="vc"><svg viewBox="0 0 36 36"><use href="#dash" x="2" y="2" width="33" height="33"/><path d="M18 8l11 19H8z" fill="none" stroke="#bbb"/><circle cx="18" cy="7" r="2.500" fill="#c0432f"/><circle cx="8" cy="26" r="2.500" fill="#c0432f"/><use href="#cursor" x="23" y="23" width="12" height="12"/></svg></b>
          <b class="vc"><svg viewBox="0 0 36 36"><path d="M2 5v23l17 7M22 2v16l12 4" fill="none" stroke="#7a7a7a" stroke-width="1.500" stroke-dasharray="4 3"/><path d="M7 11 19 1l15 5v14l-14 3H7z" fill="#93cc6c" stroke="#5f9440" stroke-width="1.500"/><path d="M7 11l13 1 14-6M20 12v11" fill="none" stroke="#5f9440" stroke-width="1.300"/><path d="M23 6v8m0 3v4" stroke="#6f8a60" stroke-width="1.200"/><use href="#cursor" x="19" y="26" width="9" height="9"/></svg></b>
          <b class="vc"><svg viewBox="0 0 36 36"><path d="M2 5v23l17 7M2 5l17 4v20" fill="none" stroke="#7a7a7a" stroke-width="1.300" stroke-dasharray="4 3"/><path d="M7 11 20 2l13 5v13l-18 4-8-4zM13 14l20-7M13 14v8" fill="none" stroke="#bbb"/><g fill="#e8413a"><circle cx="20" cy="2" r="1.500"/><circle cx="33" cy="6" r="1.500"/><circle cx="33" cy="20" r="1.500"/><circle cx="7" cy="12" r="1.500"/><circle cx="7" cy="21" r="1.500"/><circle cx="13" cy="14" r="1.500"/><circle cx="13" cy="22" r="1.500"/></g><use href="#cursor" x="19" y="26" width="9" height="9"/></svg></b>
          <b class="vc"><svg viewBox="0 0 36 36"><path d="M2 2h27v9l-9 8 14 6-10 10L2 24z" fill="none" stroke="#7a7a7a" stroke-width="1.500" stroke-dasharray="4.500 3.500"/><path d="M4 20l12-8v15z" fill="#a5d28a" stroke="#6f6f55" stroke-width="1.300"/></svg></b>
          <b class="vc"><svg viewBox="0 0 36 36"><path d="M2 2h27v9l-9 8 14 6-10 10L2 24z" fill="none" stroke="#7a7a7a" stroke-width="1.500" stroke-dasharray="4.500 3.500"/><g fill="#c0432f" stroke="#6f6f55" stroke-width=".8"><circle cx="8" cy="9" r="2.700"/><circle cx="21" cy="9" r="2.700"/><circle cx="15" cy="15" r="2.700"/><circle cx="8" cy="19" r="2.700"/><circle cx="15" cy="24" r="2.700"/><circle cx="23" cy="27" r="2.700"/></g></svg></b>
          <b class="vc"><svg viewBox="0 0 36 36"><use href="#dash" x="2" y="2" width="33" height="33"/><circle cx="11" cy="11" r="4" fill="#2693d3" stroke="#6f6f55"/><circle cx="11" cy="27" r="4" fill="#2693d3" stroke="#6f6f55"/><circle cx="24" cy="20" r="6" fill="#a5d28a" stroke="#6f6f55"/><use href="#cursor" x="23" y="23" width="12" height="12"/></svg></b>
          <b class="vc"><svg viewBox="0 0 36 36"><path d="M4 15 14 3h14v13l-7 17H4z" fill="#cdcdcd" stroke="#999" stroke-width="1.500"/><path d="M4 15h17v18M21 15l7-12" fill="none" stroke="#999" stroke-width="1.500"/><g fill="#999"><circle cx="4" cy="15" r="2.300"/><circle cx="21" cy="15" r="2.300"/><circle cx="4" cy="33" r="2.300"/><circle cx="21" cy="33" r="2.300"/><circle cx="14" cy="3" r="2.300"/><circle cx="28" cy="3" r="2.300"/><circle cx="28" cy="18" r="2.300"/></g><use href="#cursorThin" x="22" y="23" width="12" height="12"/></svg></b>
          <svg class="vmore" width="16" height="12" viewBox="0 0 16 14"><use href="#more" width="16" height="14"/></svg>
          <b class="rv">RenderView1</b>
          <div class="vbtns">
            <div class="btn"><svg width="28" height="28"><path d="M1 1h26v26H1zM14 1v26" fill="#ced6ec" stroke="#777" stroke-width="1.500"/></svg></div>
            <div class="btn"><svg width="28" height="28"><path d="M1 1h26v26H1zM1 14h26" fill="#ced6ec" stroke="#777" stroke-width="1.500"/></svg></div>
            <div class="btn"><svg width="36" height="36"><rect width="36" height="36" fill="#333638"/><rect x="4" y="11" width="29" height="21" fill="#fff"/></svg></div>
            <div class="btn"><svg width="22" height="22"><use href="#closewin"/></svg></div>
          </div>
        </div>
        <div class="render">
          <canvas id="field" class="field-map" width="630" height="442"></canvas>
          <svg class="overlay" width="1304" height="636" viewBox="0 0 1304 636">
            <path d="M79.500 556V526" stroke="#d8d820" stroke-width="1.200"/><path d="M80 511.500l4 10h-8z" fill="#e8e800"/>
            <path d="M84 556.500h7" stroke="#ddd"/><path d="M91 556.500h26" stroke="#e01010" stroke-width="1.200"/><path d="M124 556.500l-9-4v7z" fill="#e80000"/>
            <circle cx="79.500" cy="556.500" r="4.500" fill="#006000"/>
            <g class="ax"><text x="81" y="521">Y</text><text x="81.500" y="555">Z</text><text x="117" y="556">X</text></g>
            <rect x="1077" y="408" width="31" height="209" fill="url(#coolwarm)"/>
            <path d="M1101 408.500h23M1101 457.500h23M1101 514.500h23M1101 571.500h23M1101 617.500h23" stroke="#fff"/>
            <g class="ticks">
              <text x="1134" y="415" textLength="112" lengthAdjust="spacingAndGlyphs">9.3e-01</text>
              <text x="1134" y="464" textLength="47" lengthAdjust="spacingAndGlyphs">0.5</text>
              <text x="1134" y="521">0</text>
              <text x="1134" y="578" textLength="58" lengthAdjust="spacingAndGlyphs">-0.5</text>
              <text x="1134" y="624" textLength="123" lengthAdjust="spacingAndGlyphs">-9.1e-01</text>
              <text transform="translate(1290 545) rotate(-90)" textLength="66" lengthAdjust="spacingAndGlyphs">DEN</text>
            </g>
          </svg>
        </div>
      </div>
    </section>
  </main>

  <footer class="status">
    <div class="btn dim abort"><svg width="16" height="16"><path d="M4 0l4 3 4-3 4 4-3 4 3 4-4 4-4-3-4 3-4-4 3-4-3-4z" fill="#9a9a9a"/></svg></div>
    <div class="msg"></div>
    <div class="mem"><i class="chunk"></i><span>DESKTOP-143BS2D: 5.3 GiB/7.9 GiB 66.5%</span></div>
  </footer>

  <div class="taskbar">
    <div class="weather"><svg width="44" height="44"><defs><linearGradient id="sun" x1="0" y1="0" x2="1" y2="1"><stop offset="0" stop-color="#f9b233"/><stop offset="1" stop-color="#ee6a12"/></linearGradient></defs><circle cx="20" cy="25" r="15" fill="url(#sun)"/><path d="M4 21q-6-6 1-9 5-9 11 0 6 1 6 9z" fill="#bcd4f3"/><path d="M18 40q-4-6 2-8 5-8 10 0 8 1 6 8z" fill="#bcd4f3"/></svg><b class="badge">1</b></div>
    <div class="apps">
      <span><svg width="36" height="36"><defs><linearGradient id="win" x1="0" y1="0" x2="1" y2="1"><stop offset="0" stop-color="#7df0ff"/><stop offset="1" stop-color="#0a93fb"/></linearGradient></defs><path d="M1 2q0-1 1-1h15v16H1zM19 1h15q1 0 1 1v15H19zM1 19h16v16H2q-1 0-1-1zM19 19h16v15q0 1-1 1H19z" fill="url(#win)"/></svg></span>
      <span><svg width="36" height="36"><circle cx="16" cy="15" r="12.500" fill="#6a4a56" stroke="#eee" stroke-width="3"/><path d="M25 24l8 9" stroke="#ddd" stroke-width="4" stroke-linecap="round"/></svg></span>
      <span><svg width="36" height="36"><path d="M10 2h10q4 0 2 7l-5 14q-2 3-6 3H4q-4 0-3-5L5 7q1-5 5-5z" fill="#1b9ae0"/><path d="M1 20 3 13h14l-4 12H4q-4 0-3-5z" fill="#b5c92f"/><path d="M19 2h5q3 1 4 9l-8 2z" fill="#1944c8"/><path d="M22 11h10q4 1 2 7l-4 9H17l4-13q0-3 1-3z" fill="#d65cd0"/><rect x="9" y="24" width="26" height="12" rx="3" fill="#ffc90e"/><text class="pre" x="11.500" y="34">PRE</text></svg></span>
      <span><svg width="36" height="36"><rect x="0" y="10" width="27" height="24" rx="2" fill="#6c6666"/><rect x="10" y="1" width="26" height="24" rx="2" fill="#f4f4f4"/><path d="M10 10h17v15H10z" fill="#a9a6a6"/></svg></span>
      <span><svg width="36" height="36"><defs><linearGradient id="edg" x1="0" y1="0" x2="1" y2="0"><stop offset="0" stop-color="#1486dc"/><stop offset=".5" stop-color="#2cc3d8"/><stop offset="1" stop-color="#5fdc58"/></linearGradient></defs><circle cx="18" cy="18" r="18" fill="#0e6cbf"/><path d="M0 18Q1 0 18 0q18 1 18 16 0 8-10 8-5 0-4-3 4-5-2-10-9-4-20 7z" fill="url(#edg)"/><path d="M11 22q-1-9 8-11-6 9 0 16 6 5 13 2-6 8-14 7-8-3-7-14z" fill="#114a92"/><path d="M19 11q-4 6 0 12l17 1q-4 5-9 5-10-2-8-18z" fill="#32242b"/><path d="M22 20q5-7-2-10 15-3 15 9-2 6-10 5-4-1-3-4z" fill="#4ed27b"/></svg></span>
      <span><svg width="36" height="36"><circle cx="19" cy="7" r="5" fill="#7b83eb"/><circle cx="30" cy="8" r="4" fill="#5059c9"/><path d="M26 14h10v12q-1 6-8 6z" fill="#5059c9"/><path d="M11 14h17v13q-2 7-8 7t-9-7z" fill="#7b83eb"/><rect x="0" y="9" width="18" height="18" rx="1" fill="#fff"/><path d="M5 14h8M9 14v9" stroke="#4b53bc" stroke-width="2.500"/></svg></span>
      <span><svg width="36" height="36"><path d="M0 4q0-2 2-2h11l3 4h18q2 0 2 2v6H0z" fill="#e6a312"/><rect x="0" y="7" width="36" height="27" rx="2" fill="#ffd24a"/><path d="M6 35V27q0-3 3-3h18q3 0 3 3v8z" fill="#0f74c4"/><path d="M11 29h14" stroke="#0a4a8c" stroke-width="2"/></svg></span>
      <span><svg width="36" height="36"><path d="M9 8V2h18v6" fill="none" stroke="#41c3f2" stroke-width="2.500"/><path d="M1 6h34v24q0 5-5 5H6q-5 0-5-5z" fill="#f2f2f2"/><path d="M11 13h7v7h-7z" fill="#f1511b"/><path d="M19 13h7v7h-7z" fill="#80cc28"/><path d="M11 21h7v7h-7z" fill="#00adef"/><path d="M19 21h7v7h-7z" fill="#fbbc09"/></svg></span>
      <span><svg width="36" height="36"><rect width="36" height="36" fill="#e95420"/><rect x="6" y="0" width="24" height="24" fill="#fff"/><circle cx="18" cy="12" r="7" fill="none" stroke="#e95420" stroke-width="3" stroke-dasharray="11 3.700"/><circle cx="18" cy="4.500" r="1.800" fill="#e95420"/><circle cx="10.500" cy="15" r="1.800" fill="#e95420"/><circle cx="25.500" cy="15" r="1.800" fill="#e95420"/><text class="ub" x="4" y="34.500" textLength="28">22.04</text></svg></span>
      <span><svg width="36" height="36"><path d="M4 3h28v32H4z" fill="#fff"/><path d="M4 3h28" stroke="#333" stroke-width="4" stroke-dasharray="2 1.500"/><circle cx="9" cy="9" r="4.500" fill="#f0f"/><rect x="19" y="25" width="9" height="7" rx="3" fill="#1ff"/><path d="M20 8h8M6 18h22M6 21h22M6 25h11M6 29h11" stroke="#bbb"/><path d="M32 3v32" stroke="#333"/></svg></span>
      <span><svg width="36" height="36"><path d="M20 8 8 25M20 8l8 20" stroke="#7a2a3a" stroke-width="3"/><circle cx="20" cy="8" r="7.500" fill="#e6200a"/><circle cx="8" cy="25" r="7" fill="#0b5be8"/><circle cx="28" cy="29" r="6" fill="#18d018"/><circle cx="18" cy="5" r="2" fill="#ff7b6b"/><circle cx="6" cy="23" r="2" fill="#5b9aff"/></svg></span>
      <span class="running"><svg width="36" height="28"><rect width="36" height="28" rx="2" fill="#3c3c3c"/><path d="M0 2q0-2 2-2h32q2 0 2 2v3H0z" fill="#aaa"/><path d="M12 0h12v5H12z" fill="#888"/><path d="M6 10l6 6-6 6" fill="none" stroke="#eee" stroke-width="2.500"/><path d="M18 22h10" stroke="#eee" stroke-width="3"/></svg></span>
      <span class="current"><svg width="31" height="24"><use href="#pvlogo"/></svg></span>
    </div>
    <div class="tray">
      <svg width="18" height="36"><path d="M1 22l8-8 8 8" fill="none" stroke="#fff" stroke-width="1.800"/></svg>
      <svg class="t2" width="26" height="36"><path d="M2 16Q5 7 13 7q7 0 10 6M23 6v8h-7M9 28q-6-1-7-8M2 29v-7h7" fill="none" stroke="#fff" stroke-width="1.700"/><circle cx="18" cy="24" r="6" fill="#ff9a0c"/></svg>
      <svg class="t3" width="24" height="36"><rect x="1" y="10" width="22" height="16" rx="2" fill="none" stroke="#fff" stroke-width="1.600"/><path d="M5 14h14M5 18h14" stroke="#fff" stroke-width="2" stroke-dasharray="2 2"/><path d="M6 22h12" stroke="#fff" stroke-width="1.600"/></svg>
      <span class="ime">A</span>
      <svg class="t5" width="26" height="36"><path d="M2 16q11-9 22 0M5 20q8-7 16 0M8.500 23.500q4.500-4 9 0" fill="none" stroke="#fff" stroke-width="1.900"/><circle cx="13" cy="26.500" r="1.800" fill="#fff"/></svg>
      <svg class="t6" width="26" height="36"><path d="M1 15h4l6-5v17l-6-5H1z" fill="none" stroke="#fff" stroke-width="1.600"/><path d="M14 15q3 3 0 7" fill="none" stroke="#fff" stroke-width="1.600"/><path d="M17 12q6 6 0 13M21 10q7 8 0 17" fill="none" stroke="#8d6b7a" stroke-width="1.400"/></svg>
      <svg class="t7" width="26" height="36"><rect x="4" y="12" width="18" height="13" rx="3" fill="none" stroke="#fff" stroke-width="1.700"/><rect x="7" y="15" width="12" height="8" rx="1" fill="#fff"/><path d="M24 16v5" stroke="#fff" stroke-width="2"/><path d="M5 8 1 15h4l-1 5 6-8H6l2-4z" fill="#fff" stroke="#45122a" stroke-width="1"/></svg>
      <div class="clock"><span class="ck1">19:07</span><span class="ck2">2024/06/12</span></div>
      <svg class="bell" width="22" height="26"><path d="M11 1q8 1 8 9v5l2 4v1H1v-1l2-4v-5q0-8 8-9zM8 21h6q-3 4-6 0z" fill="#8ce6ff"/></svg>
    </div>
  </div>
</div>
<script src="script.js"></script>
</body>
</html>
```
FILE: styles.css
```css
* { box-sizing: border-box; }
body { margin: 0; background: #efefef; }
svg { display: block; flex: none; overflow: visible; }
.defs { position: absolute; }
i { font-style: normal; display: block; }
.app { width: 1920px; height: 1200px; overflow: hidden; display: flex; flex-direction: column; font: 22px/1 "Noto Sans", sans-serif; color: #000; }

.titlebar { height: 34px; flex: none; background: #f9eff3; display: flex; align-items: center; padding-left: 3px; }
.apptitle { font: 17px/34px "Open Sans", sans-serif; letter-spacing: -.15px; margin-left: 5px; }
.winctl { margin-left: auto; display: flex; gap: 54px; padding-right: 28px; }

.menubar { height: 41px; flex: none; border-bottom: 2px solid #d8d8d8; padding-left: 19px; display: flex; gap: 30.3px; line-height: 40px; }
.menubar u { text-decoration-thickness: 2px; text-underline-offset: 3px; }

.toolbar { height: 78px; flex: none; display: flex; align-items: center; padding-top: 2px; border-bottom: 2px solid #b8b8b8; background: linear-gradient(#fafafa, #eee); }
.toolbar.three { height: 76px; padding-top: 3px; }
.grip { width: 34px; height: 42px; flex: none; padding: 0 7px 0 17px; background: radial-gradient(circle, #bcbcbc 1.100px, transparent 1.600px) 0 0 / 7px 6px content-box content-box; }
.grip.first { margin-left: -8px; }
.three .grip.first { margin-left: -9px; }
.grip.tight { margin-right: -2px; }
.sep { width: 12px; height: 38px; flex: none; border-right: 5px solid transparent; border-left: 5px solid transparent; background: #d4d4d4 content-box; background-clip: padding-box; }
.cell { width: 64px; height: 62px; flex: none; display: flex; align-items: center; justify-content: center; font-weight: normal; }
.three .cell { width: 66px; }
.three .cell.last { width: 64px; }
.cell svg { width: 48px; height: 48px; }
.cell.on { border: 2px solid #a9a9a9; border-radius: 4px; background: #dcdcdc; }
.media { fill: #a5d28a; stroke: #6f6f55; stroke-width: 1.600px; }
.rng { fill: #a5d28a; stroke: #6f6f55; }
.rng.off { fill: #ccc; stroke: #aaa; }
.glyph { font: italic bold 26px "Open Sans", sans-serif; fill: #111; stroke: none; }
.glyph.gray { fill: #888; }
.timelabel { width: 58px; flex: none; font-size: 21px; padding: 4px 0 0 1px; letter-spacing: -.6px; }
.field { border: 2px solid #a9a9a9; border-radius: 4px; background: #fff; box-shadow: inset 0 2px #ececec; }
.timefield { width: 216px; height: 44px; padding: 9px 4px; margin-right: 4px; font-size: 22px; }
.spin { width: 68px; height: 42px; border: 2px solid #b0b0b0; border-radius: 4px; display: flex; background: linear-gradient(90deg, #f0f0f0 36px, #b0b0b0 36px 38px, #fafafa 38px); color: #888; }
.spin span { width: 36px; padding: 10px 0 0 8px; font-size: 22px; }
.more { margin-top: -2px; }
.more.m1 { margin-left: 42px; }
.more.m2 { margin-left: 28px; }
.more.m3 { margin-left: 8px; }
.combo { height: 44px; flex: none; border: 2px solid #a9a9a9; border-radius: 4px; background: linear-gradient(#fff, #ededed); display: flex; align-items: center; font-size: 21px; }
.combo span { padding-top: 3px; }
.combo.den { width: 299px; height: 48px; padding-left: 22px; margin-right: 8px; }
.combo.comp { width: 145px; border-color: #c4c4c4; }
.combo.rep { width: 300px; padding-left: 9px; letter-spacing: -.2px; }
.dot { width: 9px; height: 9px; border-radius: 50%; background: #f5bd14; border: 1px solid #8f7d33; margin-right: 18px; }
.tri { margin-left: auto; margin-right: 13px; border: 8px solid transparent; border-top-color: #555; border-bottom: 0; }
.dim .tri { border-top-color: #b0b0b0; }

.work { flex: none; height: 761px; display: flex; }
.dock { width: 597px; flex: none; display: flex; flex-direction: column; }
.docktitle { height: 41px; flex: none; display: flex; align-items: center; padding: 3px 0 0 8px; gap: 6px; letter-spacing: .05px; width: 580px; }
.docktitle span { margin-right: auto; padding-top: 2px; }
.docktitle svg { margin-top: 1px; }
.docktitle.second { height: 46px; padding-top: 0; position: relative; }
.docktitle.second span { padding-top: 1px; }
.docktitle.second svg { margin-top: -2px; }
.vhandle { position: absolute; left: 589px; top: 12px; width: 4px; height: 32px; background: radial-gradient(circle, #bbb 1px, transparent 1.500px) 0 0 / 4px 6px; }
.tree { width: 583px; height: 261px; flex: none; background: #fff; border: 1px solid #b2b2b2; padding-top: 5px; position: relative; font-size: 21px; }
.branches { position: absolute; left: 52px; top: 0; }
.node { height: 44px; display: flex; align-items: center; }
.node span { padding-top: 1px; }
.tx-built { letter-spacing: -.35px; }
.tx-t0 { letter-spacing: -.4px; }
.tx-t1 { letter-spacing: -.25px; }
.srv { margin: 0 14px 0 51px; }
.eye { margin-left: 9px; width: 28px; }
.node > .cube { margin: 0 5px 0 42px; }
.sel { margin-left: 4px; width: 242px; height: 36px; display: flex; align-items: center; gap: 5px; padding-left: 38px; background: linear-gradient(#1a86dc, #0a7ee0); color: #fff; position: relative; }
.sel::before { content: ""; position: absolute; left: 17px; top: 0; width: 17px; height: 19px; border: solid #8a8a8a; border-width: 0 0 2px 2px; }
.hhandle { height: 13px; flex: none; width: 583px; padding-left: 276px; padding-right: 271px; background: radial-gradient(circle, #bbb 1.200px, transparent 1.600px) 0 3px / 6px 6px repeat-x content-box; }
.tabs { height: 45px; flex: none; width: 583px; display: flex; align-items: flex-end; border-bottom: 2px solid #b5b5b5; }
.tab { font-size: 22px; border: 2px solid #b5b5b5; border-bottom: 0; border-radius: 5px 5px 0 0; text-align: center; flex: none; }
.tab.act { width: 156px; height: 45px; margin-bottom: -2px; background: linear-gradient(#fcfcfc, #efefef); padding-top: 12px; letter-spacing: -.3px; }
.tab.info { width: 160px; height: 40px; border-left: 0; background: #dedede; padding-top: 10px; font-size: 21px; letter-spacing: -.3px; }
.props { padding: 13px 0 0 18px; width: 566px; }
.btn { border: 2px solid #a9a9a9; border-radius: 4px; background: linear-gradient(#fff, #ebebeb); display: flex; align-items: center; justify-content: center; gap: 8px; flex: none; }
.btn.dim { border-color: #c3c3c3; color: #8a8a8a; }
.btnrow { display: flex; gap: 4px; }
.btnrow .btn { width: 160px; height: 48px; letter-spacing: -.3px; }
.btnrow .btn.help { width: 56px; }
.btnrow .btn.reset { padding-right: 3px; gap: 7px; }
.btn span { padding-top: 1px; }
.searchrow { display: flex; justify-content: space-between; margin-top: 12px; height: 46px; }
.search { width: 496px; height: 44px; padding: 11px 5px; color: #7f7f7f; font-size: 21px; white-space: nowrap; letter-spacing: .66px; }
.gear { width: 48px; height: 46px; }
.scroll { margin-top: 12px; display: grid; grid-template: 180px 28px / 520px 28px; }
.view { overflow: hidden; min-width: 0; }
.prow { display: flex; height: 51px; align-items: center; margin-bottom: 25px; gap: 9px; }
.phead { width: 351px; height: 51px; flex: none; border: 1px solid #b2b2b2; border-bottom-width: 2px; display: flex; align-items: center; padding: 0 16px 0 22px; gap: 14px; }
.phead b { font-size: 21px; line-height: 30px; white-space: nowrap; overflow: hidden; font-weight: 600; padding-top: 3px; }
.tx-p1 { letter-spacing: .1px; }
.minus { width: 27px; height: 10px; flex: none; background: #2693d3; border: 1px solid #8a9a9a; }
.btn.sq { width: 56px; height: 48px; }
.reprow { display: flex; align-items: flex-start; margin-top: -12px; }
.tx-rep { width: 161px; flex: none; font-size: 21px; padding-top: 13px; letter-spacing: .1px; }
.combo.small { width: 420px; height: 50px; padding-left: 8px; align-items: flex-start; }
.combo.small span { padding-top: 11px; letter-spacing: -.2px; }
.vbar { display: flex; flex-direction: column; border-left: 1px solid #bbb; }
.vbar i, .hbar i { display: flex; align-items: center; justify-content: center; background: #fafafa; }
.vbar .up, .vbar .dn { height: 26px; }
.vbar .thumb { height: 53px; border-top: 2px solid #bbb; background: linear-gradient(90deg, #fff, #eee); }
.vbar .trough { flex: 1; background: #e3e3e3; border: solid #bbb; border-width: 2px 0; }
.hbar { display: flex; border-top: 1px solid #bbb; }
.hbar .lf { width: 25px; }
.hbar .thumb { width: 398px; border-left: 2px solid #bbb; background: linear-gradient(#fff, #eee); }
.hbar .trough { flex: 1; background: #e3e3e3; border: solid #bbb; border-width: 0 2px; }
.hbar .rt { width: 28px; }
.corner { border: 1px solid #bbb; }

.layout { width: 1323px; display: flex; flex-direction: column; }
.ltabs { height: 56px; flex: none; display: flex; align-items: flex-end; }
.ltab { width: 219px; height: 55px; border: 2px solid #a9a9a9; border-bottom: 0; border-radius: 5px 5px 0 0; background: #fff; display: flex; align-items: center; padding: 0 0 2px 21px; gap: 7px; margin-bottom: -2px; position: relative; }
.ltab span { padding-top: 1px; letter-spacing: -.3px; }
.ltab.plus { width: 58px; height: 47px; background: #e9e9e9; padding: 0; justify-content: center; border-left: 0; border-color: #bbb; margin-bottom: 2px; }
.pane { height: 706px; margin-top: -2px; border: 2px solid #a9a9a9; border-left-width: 1px; width: 1322px; padding: 3px 2px 0; }
.viewbar { height: 52px; display: flex; align-items: center; box-shadow: 0 -3px #fff; padding-bottom: 3px; }
.vc { width: 52px; flex: none; display: flex; justify-content: center; }
.vc svg { width: 36px; height: 36px; }
.vc.off { opacity: .55; filter: grayscale(1); }
.vsep { width: 12px; flex: none; height: 26px; border: solid transparent; border-width: 0 5px; background: #cfcfcf padding-box; }
.two-d { font: bold 25px/1 "Open Sans", sans-serif; color: #6f6f55; letter-spacing: -2px; justify-content: center; }
.vmore { margin: -3px 5px 0 43px; }
.rv { font-size: 22px; letter-spacing: -.7px; text-decoration: underline; text-decoration-thickness: 2px; text-underline-offset: 4px; }
.vbtns { margin-left: auto; margin-right: -1px; display: flex; gap: 2px; }
.vbtns .btn { width: 52px; height: 50px; }
.render { width: 1316px; height: 648px; border: 4px solid #00f; background: #52576e; box-shadow: inset 0 0 0 2px #eee; position: relative; }
.overlay { position: absolute; left: 2px; top: 2px; }
.field-map { position: absolute; left: 297px; top: 138px; }
.ax { font: 14px "Liberation Sans", sans-serif; fill: #eee; }
.ticks { font: 300 32px Lato, sans-serif; fill: #fff; stroke: #fff; stroke-width: .5px; }

.status { height: 60px; flex: none; display: flex; padding: 8px 2px 0 638px; }
.abort { width: 40px; height: 38px; margin-top: 4px; }
.msg { width: 590px; height: 48px; margin-left: 4px; border: solid #a0a0a0; border-width: 2px 0 0 2px; box-shadow: inset -2px -2px #fff; }
.mem { width: 634px; height: 48px; margin-left: auto; border: 2px solid #a9a9a9; border-radius: 4px; background: #fff; display: grid; overflow: hidden; }
.mem > * { grid-area: 1 / 1; }
.chunk { width: 418px; background: linear-gradient(#dcfcd6, #b6dcb2); box-shadow: 0 0 0 2px #86a883; }
.mem span { font: 23px/46px "Open Sans", sans-serif; text-align: center; letter-spacing: -.16px; z-index: 1; white-space: nowrap; }

.taskbar { height: 72px; flex: none; display: flex; border-top: 2px solid #55394a; background: linear-gradient(90deg, #45132b 0, #48152c 25%, #32242b 34%, #32242b 60%, #45142b 72%, #44112b); color: #fff; }
.weather { width: 44px; margin: 9px 0 0 29px; height: 44px; position: relative; }
.badge { position: absolute; left: 19px; top: -1px; width: 23px; height: 24px; border-radius: 50%; background: #c42b1c; font: 15px/23px "Open Sans", sans-serif; text-align: center; }
.apps { display: flex; margin-left: 422px; height: 70px; }
.apps span { width: 66px; display: flex; align-items: center; justify-content: center; position: relative; }
.apps .current { width: 60px; height: 60px; margin: 4px 3px; border-radius: 6px; background: #5a2a40; border: 1px solid #643648; }
.apps .current::after, .apps .running::after { content: ""; position: absolute; height: 5px; bottom: 0; width: 24px; border-radius: 3px; background: #4cc2ff; }
.apps .running::after { width: 8px; bottom: 6px; background: #9a8a90; }
.pre { font: bold 12px "Open Sans", sans-serif; fill: #222; }
.ub { font: 12px "Open Sans", sans-serif; fill: #fff; }
.tray { display: flex; align-items: center; margin-left: 101px; height: 68px; }
.t2 { margin-left: 26px; }
.t3 { margin-left: 23px; }
.ime { width: 18px; margin-left: 27px; font: 300 28px/36px "Open Sans", sans-serif; text-align: center; }
.t5 { margin-left: 26px; }
.t6 { margin-left: 10px; }
.t7 { margin-left: 9px; }
.clock { margin-left: 21px; width: 96px; display: flex; flex-direction: column; align-items: flex-end; font: 17px/24px "Open Sans", sans-serif; letter-spacing: .05px; white-space: nowrap; }
.bell { margin-left: 11px; }
```
FILE: script.js
```js
// Paints the DEN slice: a polycrystalline hexagonal density field, cool-to-warm.
const canvas = document.getElementById('field');
const ctx = canvas.getContext('2d');
const W = canvas.width, H = canvas.height;
const stops = [[59, 76, 192], [98, 130, 234], [141, 176, 254], [185, 208, 249], [221, 221, 221], [242, 203, 183], [244, 154, 123], [221, 95, 75], [180, 4, 38]];
const A = 8.9, B = 8.77;
const waves = [[1 / A, 0], [-0.5 / A, 1 / B], [0.5 / A, 1 / B]];
// each grain: centre x, centre y, lattice rotation
const grains = [
  [70, 60, 0], [60, 220, 0.02], [70, 370, -0.03], [230, 60, 0.1],
  [215, 190, -0.08], [200, 330, 0.03], [350, 110, 0.18], [330, 260, 0.1],
  [330, 390, 0.2], [460, 90, 0.04], [440, 250, -0.06], [470, 380, 0.07],
  [580, 120, -0.02], [580, 330, 0.02]
];
const img = ctx.createImageData(W, H);
for (let y = 0; y < H; y++) {
  for (let x = 0; x < W; x++) {
    const px = x + 16 * Math.sin(y / 23) + 7 * Math.sin(y / 9), py = y + 16 * Math.sin(x / 27) + 6 * Math.sin(x / 11);
    const d = grains.map(g => Math.hypot(px - g[0], py - g[1]));
    const near = Math.min(...d);
    const warpX = 3 * Math.sin(y / 60 + x / 140), warpY = 3 * Math.sin(x / 70 - y / 150);
    let f = 0, total = 0;
    grains.forEach((g, i) => {
      const w = Math.exp(-(d[i] - near) / 1.2);
      if (w < 0.05) return;
      const c = Math.cos(g[2]), s = Math.sin(g[2]), dx = x - g[0], dy = y - g[1];
      const u = g[0] + dx * c - dy * s + warpX, v = g[1] + dx * s + dy * c + warpY;
      let sum = 0;
      for (const k of waves) sum += Math.cos(2 * Math.PI * (k[0] * u + k[1] * v));
      f += w * sum;
      total += w;
    });
    const level = Math.pow(Math.max(0, (f / total + 1.5) / 4.5), 1.1);
    const t = Math.min(0.95, 0.1 + 0.86 * level) * 8;
    const i = Math.floor(t), r = t - i, o = (y * W + x) * 4;
    for (let c = 0; c < 3; c++) img.data[o + c] = stops[i][c] * (1 - r) + stops[i + 1][c] * r;
    img.data[o + 3] = 255;
  }
}
ctx.putImageData(img, 0, 0);
```
